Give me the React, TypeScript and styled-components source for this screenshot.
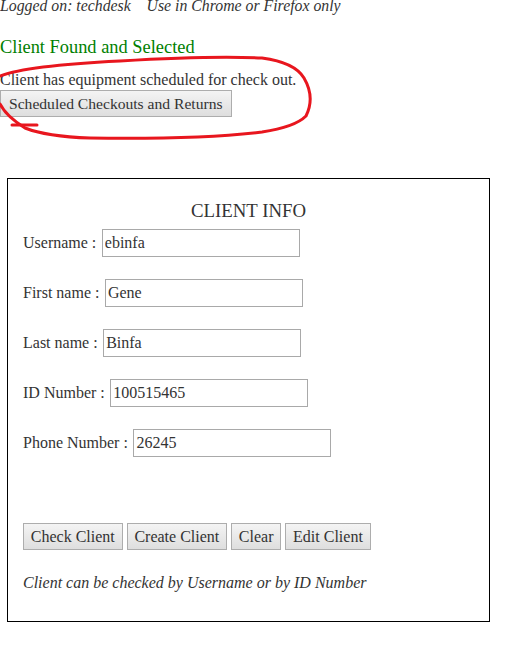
import React from "react";
import styled, { createGlobalStyle } from "styled-components";

const Global = createGlobalStyle`
  html, body { margin: 0; padding: 0; background: #fff; }
  body {
    font-family: "Liberation Serif", "Times New Roman", serif;
    font-size: 16px;
    color: #333;
  }
  input, button {
    font: 16px "Liberation Serif", "Times New Roman", serif;
  }
`;

const Page = styled.div`
  position: relative;
  width: 514px;
  height: 660px;
  overflow: hidden;
`;

const TopLine = styled.div`
  font-style: italic;
  font-size: 15.8px;
  line-height: 18px;
  margin-top: -3px;
  white-space: pre;
`;

const Status = styled.div`
  color: #008000;
  font-size: 18.4px;
  line-height: 20px;
  margin-top: 22px;
`;

const Notice = styled.div`
  font-size: 16px;
  line-height: 18px;
  margin-top: 14px;
`;

const Button = styled.button`
  font: 16px "Liberation Serif", "Times New Roman", serif;
  color: #333;
  height: 27px;
  padding: 0 6.8px;
  white-space: nowrap;
  border: 1px solid #adadad;
  border-radius: 0;
  background: linear-gradient(#f4f4f4, #dedede);
  margin: 0;
`;

const TopButton = styled(Button)`
  margin-top: 1px;
  padding: 0 8px;
  font-size: 15.6px;
`;

const Box = styled.div`
  margin: 61px 0 0 7px;
  width: 483px;
  height: 444px;
  border: 1px solid #000;
  padding: 0 15px;
  box-sizing: border-box;
  display: flex;
  flex-direction: column;
`;

const Title = styled.div`
  text-align: center;
  font-size: 18.8px;
  line-height: 20px;
  margin-top: 22px;
`;

const Fields = styled.div`
  display: flex;
  flex-direction: column;
  gap: 23px;
  margin-top: 8px;
`;

const Row = styled.div`
  display: flex;
  align-items: center;
  height: 27px;
`;

const Label = styled.span`
  white-space: pre;
`;

const Input = styled.input`
  font: 16px "Liberation Serif", "Times New Roman", serif;
  color: #333;
  width: 198px;
  height: 28px;
  box-sizing: border-box;
  border: 1px solid #a9a9a9;
  padding: 0 2px;
  margin: 0 0 0 1.5px;
  outline: none;
`;

const Buttons = styled.div`
  display: flex;
  gap: 4px;
  margin-top: 67px;
`;

const Note = styled.div`
  font-style: italic;
  margin-top: 24px;
`;

const Scribble = styled.svg`
  position: absolute;
  left: 0;
  top: 0;
  pointer-events: none;
`;

const fields = [
  { label: "Username : ", value: "ebinfa" },
  { label: "First name : ", value: "Gene" },
  { label: "Last name : ", value: "Binfa" },
  { label: "ID Number : ", value: "100515465" },
  { label: "Phone Number : ", value: "26245" },
];

export default function App() {
  return (
    <Page>
      <Global />
      <TopLine>{"Logged on: techdesk    Use in Chrome or Firefox only"}</TopLine>
      <Status>Client Found and Selected</Status>
      <Notice>Client has equipment scheduled for check out.</Notice>
      <TopButton>Scheduled Checkouts and Returns</TopButton>
      <Box>
        <Title>CLIENT INFO</Title>
        <Fields>
          {fields.map((f) => (
            <Row key={f.label}>
              <Label>{f.label}</Label>
              <Input defaultValue={f.value} />
            </Row>
          ))}
        </Fields>
        <Buttons>
          <Button>Check Client</Button>
          <Button>Create Client</Button>
          <Button>Clear</Button>
          <Button>Edit Client</Button>
        </Buttons>
        <Note>Client can be checked by Username or by ID Number</Note>
      </Box>
      <Scribble width="514" height="160" viewBox="0 0 514 160">
        <path
          d="M0 76 C 20 68, 60 64, 120 61 C 170 58, 220 56, 262 58 C 285 61, 298 68, 304 78 C 311 90, 313 102, 306 116 C 298 124, 282 129, 262 132 C 220 137, 160 139, 90 138 C 60 137, 40 134, 25 128 C 12 120, 4 112, 0 104"
          fill="none"
          stroke="#e8161e"
          strokeWidth="3"
          strokeLinecap="round"
        />
        <path d="M12 125 L 37 125" fill="none" stroke="#e8161e" strokeWidth="3" strokeLinecap="round" />
      </Scribble>
    </Page>
  );
}
